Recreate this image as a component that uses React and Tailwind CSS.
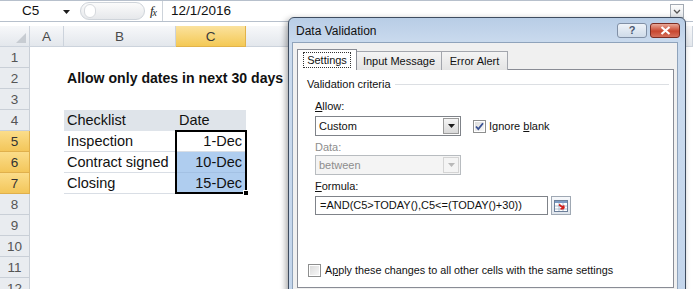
import React from 'react';

const rows = Array.from({ length: 12 }, (_, i) => i + 1);
const picked = [5, 6, 7];

const checklist = {
  5: { label: 'Inspection', date: '1-Dec' },
  6: { label: 'Contract signed', date: '10-Dec' },
  7: { label: 'Closing', date: '15-Dec' },
};

const Arrow = ({ faded }) => (
  <svg width="7" height="4" viewBox="0 0 7 4">
    <path d="M0 0h7L3.5 4z" fill={faded ? '#b9b9b9' : '#1c1c1c'} />
  </svg>
);

const Checkbox = ({ checked }) => (
  <div className="w-[13px] h-[13px] border border-[#8e8f8f] bg-white p-[1px] shrink-0">
    <div className="w-full h-full bg-[linear-gradient(135deg,#dcdcdc,#f7f7f7)] flex items-center justify-center">
      {checked && (
        <svg width="9" height="9" viewBox="0 0 9 9">
          <path d="M1 4.5l2.3 2.6L8 1.2" stroke="#3a5294" strokeWidth="1.8" fill="none" />
        </svg>
      )}
    </div>
  </div>
);

const FormulaBar = () => (
  <div className="h-[22px] flex items-stretch border-t border-b border-[#b7c0cc] bg-white">
    <div className="w-[80px] flex items-center pl-[22px] text-[13.5px] text-[#111]">
      <span className="flex-1">C5</span>
      <span className="mr-[10px] mt-[1px]"><Arrow /></span>
    </div>
    <div className="w-[65px] my-[1px] rounded-full border border-[#cfd4da] bg-[linear-gradient(180deg,#fbfbfb,#e6e8eb)] flex items-center pl-[3px]">
      <div className="w-[12px] h-[14px] rounded-full border border-[#d6d9dd] bg-white" />
    </div>
    <div className="w-[18px] flex items-center justify-center font-['Liberation_Serif',serif] italic text-[13px] text-[#222] border-r border-[#cdd3da]">
      f<span className="text-[10px] -ml-[1px] mt-[3px]">x</span>
    </div>
    <div className="flex-1 flex items-center pl-[8px] text-[13.5px] text-[#111]">12/1/2016</div>
    <div className="w-[14px] h-[14px] self-center mr-[9px] border border-[#a3aab3] bg-[linear-gradient(180deg,#fdfdfd,#e4e7eb)] flex items-center justify-center">
      <svg width="8" height="5" viewBox="0 0 8 5">
        <path d="M1 1l3 3 3-3" stroke="#555" strokeWidth="1.3" fill="none" />
      </svg>
    </div>
  </div>
);

const ColHead = ({ children, active }) => (
  <div
    className={`flex items-center justify-center pt-[2px] border-r border-b text-[13.5px] ${
      active
        ? 'bg-[linear-gradient(180deg,#fbe29e,#f4c955)] border-[#e2b34a] text-[#3a3a3a]'
        : 'bg-[linear-gradient(180deg,#f7f8fa,#e3e7ec)] border-[#ccd3dc] text-[#4a4a4a]'
    }`}
  >
    {children}
  </div>
);

const RowHead = ({ n }) => {
  const on = picked.includes(n);
  return (
    <div
      className={`flex items-center justify-center pt-[2px] border-r border-b text-[13.5px] ${
        on
          ? 'bg-[linear-gradient(180deg,#fbdd8a,#f3c65a)] border-[#e0b04c] text-[#333]'
          : 'bg-[#e9ecf0] border-[#c9cfd7] text-[#555]'
      }`}
    >
      {n}
    </div>
  );
};

const Sheet = () => (
  <div className="grid grid-cols-[30px_34px_112px_70px_1fr] auto-rows-[21px] mt-[4px]">
    <div className="bg-[linear-gradient(180deg,#f7f8fa,#e3e7ec)] border-r border-b border-[#ccd3dc] flex items-end justify-end p-[3px]">
      <svg width="10" height="10" viewBox="0 0 10 10">
        <path d="M10 0v10H0z" fill="#c7ccd2" />
      </svg>
    </div>
    <ColHead>A</ColHead>
    <ColHead>B</ColHead>
    <ColHead active>C</ColHead>
    <ColHead>D</ColHead>

    {rows.map((r) => {
      const item = checklist[r];
      return (
        <React.Fragment key={r}>
          <RowHead n={r} />
          <div className="bg-white" />
          {r === 2 ? (
            <div className="bg-white flex items-center pl-[3px] pt-[1px] text-[14.1px] font-bold whitespace-nowrap overflow-visible z-[1]">
              Allow only dates in next 30 days
            </div>
          ) : r === 4 ? (
            <div className="bg-[#dfe4ea] flex items-center pl-[3px] pt-[1px]">Checklist</div>
          ) : item ? (
            <div className="bg-white border-b border-[#d9dee5] flex items-center pl-[3px] pt-[1px]">{item.label}</div>
          ) : (
            <div className="bg-white" />
          )}
          {r === 4 ? (
            <div className="bg-[#dfe4ea] flex items-center pl-[3px] pt-[1px]">Date</div>
          ) : item ? (
            <div
              className={`relative border-b flex items-center justify-end pr-[4px] pt-[1px] ${
                r === 5 ? 'bg-white border-[#d9dee5]' : 'bg-[#afcdef] border-[#a3c1e4]'
              }`}
            >
              {item.date}
              {r === 5 && (
                <div className="absolute left-[-1px] top-[-1px] w-[72px] h-[64px] border-[2px] border-black z-10">
                  <div className="absolute right-[-4px] bottom-[-4px] w-[6px] h-[6px] bg-black border border-white" />
                </div>
              )}
            </div>
          ) : (
            <div className="bg-white" />
          )}
          <div className="bg-white" />
        </React.Fragment>
      );
    })}
  </div>
);

const Select = ({ value, disabled }) => (
  <div
    className={`w-[146px] h-[20px] flex items-center border pl-[3px] pr-[1px] ${
      disabled ? 'bg-[#f4f4f4] border-[#b8bcc0] text-[#8d8d8d]' : 'bg-white border-[#7f8389] text-[#111]'
    }`}
  >
    <span className="flex-1">{value}</span>
    <div
      className={`w-[16px] h-[16px] border flex items-center justify-center ${
        disabled
          ? 'border-[#d4d4d4] bg-[#f4f4f4]'
          : 'border-[#9a9a9a] bg-[linear-gradient(180deg,#f5f5f5,#d9d9d9)]'
      }`}
    >
      <Arrow faded={disabled} />
    </div>
  </div>
);

const RefButton = () => (
  <div className="w-[20px] h-[19px] ml-[3px] border border-[#9fa8b3] bg-[linear-gradient(180deg,#f6f8fb,#dfe5ec)] flex items-center justify-center">
    <svg width="14" height="12" viewBox="0 0 14 12">
      <rect x="0.5" y="0.5" width="13" height="11" fill="#fff" stroke="#6c7f99" />
      <rect x="1" y="1" width="12" height="2" fill="#7c9bc4" />
      <path d="M1 6h12M1 9h12M5 3v8M9 3v8" stroke="#9db0c8" strokeWidth="0.8" />
      <path d="M5 4.5l5 4M10 8.5l-3.5 0.3M10 8.5l-0.5-3.2" stroke="#d2201b" strokeWidth="1.7" fill="none" />
    </svg>
  </div>
);

const Dialog = () => (
  <div className="absolute left-[288px] top-[17px] w-[398px] h-[290px] rounded-t-[6px] border border-[#3f4d60] bg-[linear-gradient(180deg,#b8cde6,#cbdbee_26px,#c3d5eb)] shadow-[-2px_2px_6px_rgba(0,0,0,0.35)] flex flex-col font-['Liberation_Sans',Arial,sans-serif] text-[11px]">
    <div className="h-[24px] flex items-center pl-[7px] pr-[5px] pt-[1px]">
      <span className="flex-1 text-[12px] text-[#111]">Data Validation</span>
      <div className="w-[30px] h-[15px] rounded-[3px] border border-[#8190a6] bg-[linear-gradient(180deg,#eef3f9,#cfdbe9)] flex items-center justify-center text-[11px] font-bold text-[#4a5870]">
        ?
      </div>
      <div className="w-[30px] h-[15px] ml-[3px] rounded-[3px] border border-[#7b2c22] bg-[linear-gradient(180deg,#e9a898,#c8472f_55%,#d6705b)] flex items-center justify-center">
        <svg width="11" height="9" viewBox="0 0 11 9">
          <path d="M1.5 1l8 7M9.5 1l-8 7" stroke="#fff" strokeWidth="2.2" />
        </svg>
      </div>
    </div>
    <div className="flex-1 ml-[3px] mr-[7px] bg-[#f0f0f0] border border-[#8fa3bb] pl-[4px] pt-[6px]">
      <div className="flex items-end h-[21px]">
        <div className="w-[60px] h-[21px] bg-white border border-b-0 border-[#898c95] flex items-center justify-center z-[1]">
          <span className="px-[3px] py-[1px] border border-dotted border-[#333] leading-[12px]">Settings</span>
        </div>
        <div className="w-[85px] h-[19px] bg-[linear-gradient(180deg,#f4f4f4,#e4e4e4)] border border-l-0 border-b-0 border-[#a3a6ad] flex items-center justify-center">
          Input Message
        </div>
        <div className="w-[66px] h-[19px] bg-[linear-gradient(180deg,#f4f4f4,#e4e4e4)] border border-l-0 border-b-0 border-[#a3a6ad] flex items-center justify-center">
          Error Alert
        </div>
      </div>
      <div className="w-[377px] h-[219px] -mt-px bg-white border border-[#898c95] pl-[9px] pr-[4px] pt-[7px] text-[#111]">
        <div className="flex items-center h-[14px]">
          <span>Validation criteria</span>
          <div className="flex-1 h-px bg-[#dcdfe3] ml-[4px]" />
        </div>
        <div className="ml-[8px]">
          <div className="h-[14px] mt-[8px] flex items-center">
            <span><span className="underline">A</span>llow:</span>
          </div>
          <div className="flex items-center mt-[3px]">
            <Select value="Custom" />
            <div className="ml-[12px] flex items-center">
              <Checkbox checked />
              <span className="ml-[3px]">Ignore <span className="underline">b</span>lank</span>
            </div>
          </div>
          <div className="h-[14px] mt-[4px] flex items-center text-[#8d8d8d]">Data:</div>
          <div className="mt-[1px]">
            <Select value="between" disabled />
          </div>
          <div className="h-[14px] mt-[4px] flex items-center">
            <span><span className="underline">F</span>ormula:</span>
          </div>
          <div className="flex items-center mt-[3px]">
            <div className="w-[233px] h-[19px] border border-[#7f8389] bg-white flex items-center pl-[4px] whitespace-nowrap">
              =AND(C5&gt;TODAY(),C5&lt;=(TODAY()+30))
            </div>
            <RefButton />
          </div>
        </div>
        <div className="flex items-center mt-[47px] ml-[1px]">
          <Checkbox />
          <span className="ml-[4px] text-[10.8px]">
            A<span className="underline">p</span>ply these changes to all other cells with the same settings
          </span>
        </div>
      </div>
    </div>
  </div>
);

export default function App() {
  return (
    <div className="relative w-[693px] h-[289px] overflow-hidden bg-white font-['Liberation_Sans',Arial,sans-serif] text-[14.5px] text-[#111]">
      <FormulaBar />
      <Sheet />
      <Dialog />
    </div>
  );
}
